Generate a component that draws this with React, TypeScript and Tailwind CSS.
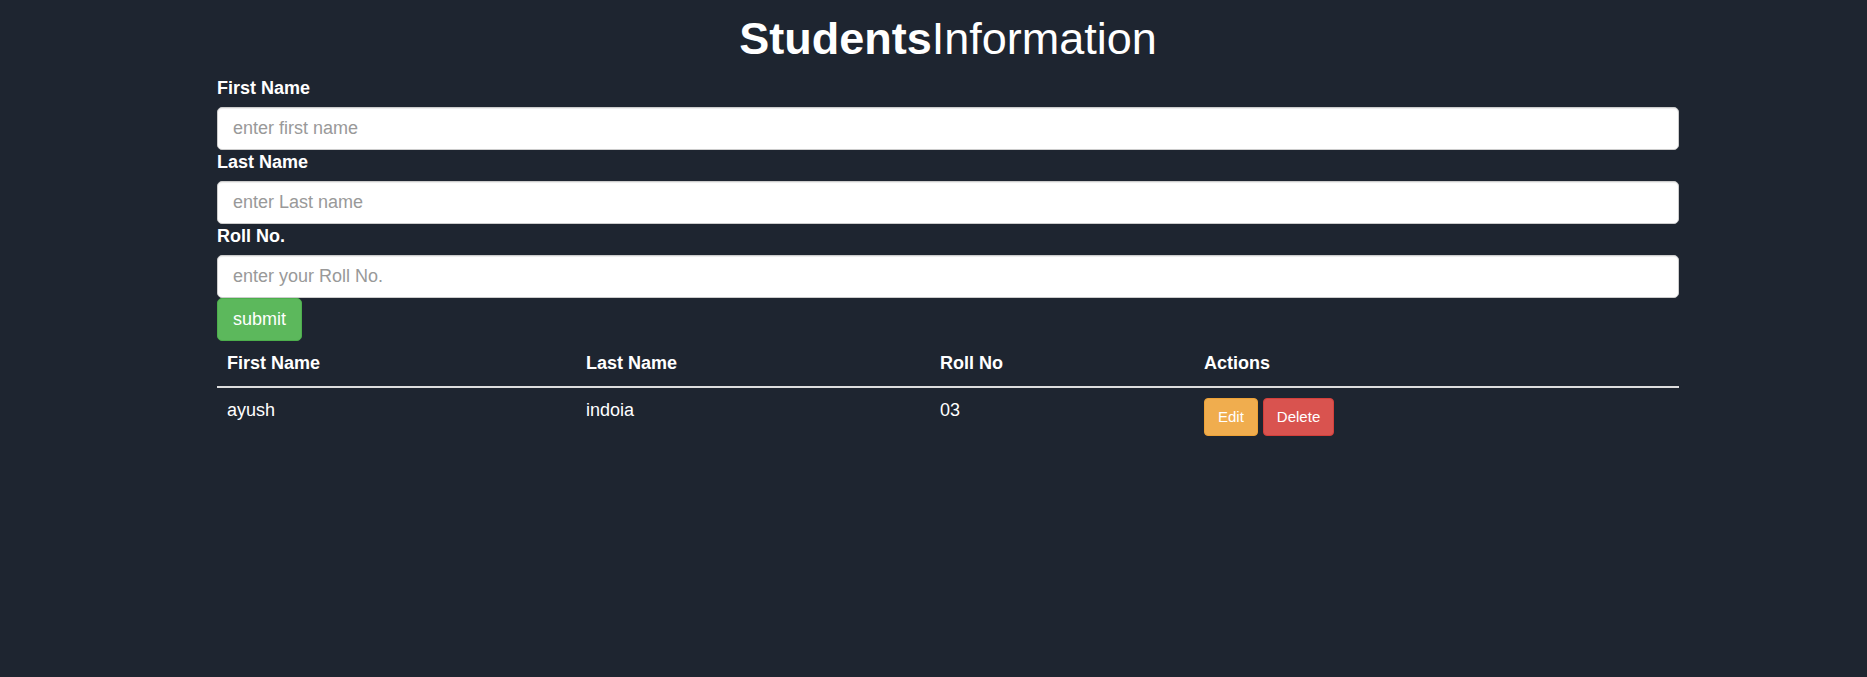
import { useState } from "react";
import type { FormEvent } from "react";

type Student = { firstName: string; lastName: string; rollNo: string };

const fields: { key: keyof Student; label: string; placeholder: string }[] = [
  { key: "firstName", label: "First Name", placeholder: "enter first name" },
  { key: "lastName", label: "Last Name", placeholder: "enter Last name" },
  { key: "rollNo", label: "Roll No.", placeholder: "enter your Roll No." },
];

const empty: Student = { firstName: "", lastName: "", rollNo: "" };

export default function App() {
  const [form, setForm] = useState<Student>(empty);
  const [students, setStudents] = useState<Student[]>([
    { firstName: "ayush", lastName: "indoia", rollNo: "03" },
  ]);

  const remove = (index: number) =>
    setStudents(students.filter((_, i) => i !== index));

  const edit = (index: number) => {
    setForm(students[index]);
    remove(index);
  };

  const submit = (event: FormEvent) => {
    event.preventDefault();
    setStudents([...students, form]);
    setForm(empty);
  };

  return (
    <div className="min-h-screen bg-[#1e2530] pt-[14px] pl-[29px] font-['Liberation_Sans',Arial,sans-serif] text-lg/[25px] text-white">
      <main className="mx-auto max-w-[1462px]">
        <h1 className="mb-3 text-center text-[45px]/[50px]">
          <strong className="font-bold">Students</strong>Information
        </h1>
        <form onSubmit={submit}>
          {fields.map(({ key, label, placeholder }) => (
            <div key={key}>
              <label htmlFor={key} className="mb-[6px] block w-fit font-bold">
                {label}
              </label>
              <input
                id={key}
                type="text"
                value={form[key]}
                placeholder={placeholder}
                onChange={(e) => setForm({ ...form, [key]: e.target.value })}
                className="block h-[43px] w-full rounded-[5px] border border-[#ccc] bg-white px-[15px] text-[#555] shadow-[inset_0_1px_1px_rgba(0,0,0,0.075)] placeholder:text-[#999]"
              />
            </div>
          ))}
          <button
            type="submit"
            className="block h-[43px] rounded-[5px] border border-[#4cae4c] bg-[#5cb85c] px-[15px]"
          >
            submit
          </button>
        </form>
        <table className="w-full border-collapse text-left">
          <thead>
            <tr className="border-b-2 border-[#ddd]">
              <th className="w-[359px] p-[10px]">First Name</th>
              <th className="w-[354px] p-[10px]">Last Name</th>
              <th className="w-[264px] p-[10px]">Roll No</th>
              <th className="w-[485px] p-[10px]">Actions</th>
            </tr>
          </thead>
          <tbody>
            {students.map((student, index) => (
              <tr key={index} className="align-top">
                <td className="p-[10px]">{student.firstName}</td>
                <td className="p-[10px]">{student.lastName}</td>
                <td className="p-[10px]">{student.rollNo}</td>
                <td className="p-[10px]">
                  <div className="flex gap-[5px] text-[15px]/[22px]">
                    <button
                      type="button"
                      onClick={() => edit(index)}
                      className="h-[38px] rounded-[4px] border border-[#eea236] bg-[#f0ad4e] px-[13px]"
                    >
                      Edit
                    </button>
                    <button
                      type="button"
                      onClick={() => remove(index)}
                      className="h-[38px] rounded-[4px] border border-[#d43f3a] bg-[#d9534f] px-[13px]"
                    >
                      Delete
                    </button>
                  </div>
                </td>
              </tr>
            ))}
          </tbody>
        </table>
      </main>
    </div>
  );
}
